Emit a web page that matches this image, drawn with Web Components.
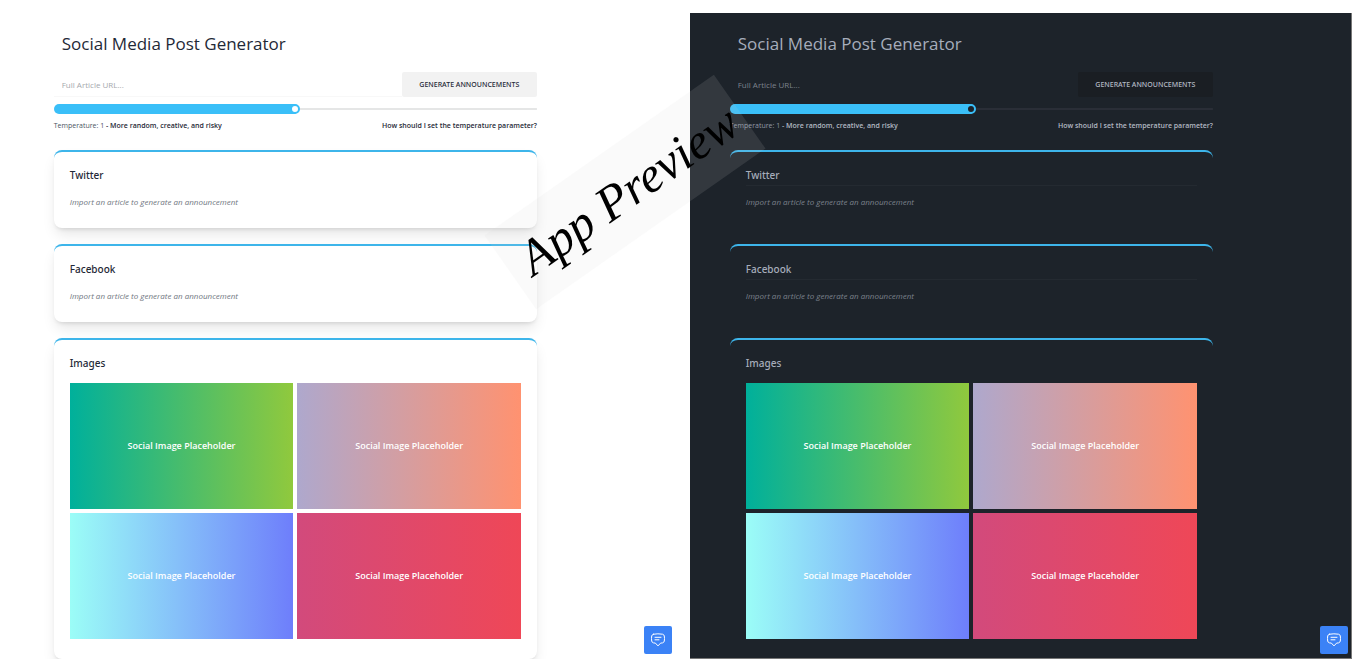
<!DOCTYPE html>
<html lang="en">
<head>
<meta charset="utf-8">
<meta name="viewport" content="width=device-width, initial-scale=1">
<title>Social Media Post Generator</title>
<style>
  body { margin: 0; background: #fff; font-family: "Open Sans", "Noto Sans", sans-serif; }
</style>
</head>
<body>
<preview-board>
  <post-generator theme="light"></post-generator>
  <post-generator theme="dark"></post-generator>
  <preview-stamp slot="stamp">App Preview</preview-stamp>
</preview-board>
<script>
const define = (name, html) => {
  const template = document.createElement('template');
  template.innerHTML = html;
  customElements.define(name, class extends HTMLElement {
    constructor() {
      super();
      this.attachShadow({ mode: 'open' }).append(template.content.cloneNode(true));
    }
  });
};

define('preview-board', `
  <style>
    :host { display: block; position: relative; padding: 13px 14px; }
    main { display: grid; grid-template-columns: 1fr 1fr; gap: 14px; }
  </style>
  <main><slot></slot></main>
  <slot name="stamp"></slot>
`);

define('preview-stamp', `
  <style>
    :host {
      position: absolute; left: 625px; top: 192px; width: 280px; height: 90px;
      display: flex; align-items: center; justify-content: center;
      transform: translate(-50%, -50%) rotate(-35deg);
      background: rgba(210, 210, 210, .12); color: #000; pointer-events: none;
      font: italic 50px/90px "Liberation Serif", serif; white-space: nowrap;
    }
    span { padding-left: 8px; }
  </style>
  <span><slot></slot></span>
`);

define('social-card', `
  <style>
    :host { display: block; border-top: 2px solid #3db5ea; border-radius: 8px; padding: 15px 16px 20px;
      box-sizing: border-box; background: var(--card); box-shadow: var(--shadow); }
    h2 { margin: 0; font: 500 10px/16px "Noto Sans", sans-serif; color: var(--heading);
      padding-bottom: 2px; border-bottom: 1px solid var(--line); }
  </style>
  <h2><slot name="title"></slot></h2>
  <slot></slot>
`);

define('image-tile', `
  <style>
    :host { display: flex; align-items: center; justify-content: center; aspect-ratio: 16 / 9;
      color: #fff; font-size: 9px; line-height: 12px; font-weight: 600;
      background: linear-gradient(90deg, var(--from), var(--to)); }
  </style>
  <slot></slot>
`);

define('chat-button', `
  <style>
    :host { display: block; }
    button { display: flex; align-items: center; justify-content: center; width: 28px; height: 28px;
      padding: 0; border: 0; border-radius: 2px; background: #3b82f6; color: #fff; cursor: pointer; }
    svg { width: 16px; height: 16px; }
  </style>
  <button type="button" aria-label="Open chat">
    <svg viewBox="0 0 16 16" fill="none" stroke="currentColor" stroke-width="1" stroke-linecap="round" stroke-linejoin="round" aria-hidden="true">
      <path d="M3.500 2.200Q8 1.400 12.500 2.200Q14 2.500 14.300 4Q14.700 6.500 14.300 9Q14 10.600 12.500 10.900L10.600 11.100L8 13.900L5.400 11.100L3.500 10.900Q2 10.600 1.700 9Q1.300 6.500 1.700 4Q2 2.500 3.500 2.200Z"/>
      <path d="M5 5.300H11M5 7.800H9"/>
    </svg>
  </button>
`);

define('post-generator', `
  <style>
    :host { display: block; position: relative; overflow: hidden; box-sizing: border-box;
      padding: 18px 21% 0 6%; background: var(--base); color: var(--text);
      --base: #fff; --card: #fff; --text: #1f2937; --heading: #1f2937; --muted: #6f7680; --hint: #a5a8ad;
      --soft: #4b5563; --field: #f8f8f8; --btn: #f2f2f2; --track: #e5e6e6; --line: transparent;
      --shadow: 0 8px 14px -2px rgba(0,0,0,.1), 0 3px 4px -2px rgba(0,0,0,.12); --accent: #3abff8; }
    :host([theme="dark"]) { box-shadow: inset -1px -1px #777;
      --base: #1d232a; --card: transparent; --text: #b3b9c3; --heading: #a6adbb; --muted: #7c828c; --hint: #7c828c;
      --soft: #9299a5; --field: transparent; --btn: #1a1e23; --track: #2a2e37; --line: #242a31;
      --shadow: none; }
    h1 { margin: 0 8px 15px; font-size: 17px; line-height: 26px; font-weight: 400; color: var(--heading); }
    form { margin: 0; }
    .row { display: flex; height: 25px; }
    .url { flex: 1; min-width: 0; box-sizing: border-box; padding: 2px 8px 0; border: 0;
      border-bottom: 1px solid var(--field); background: none; color: var(--text); font: 8px/12px "Open Sans", sans-serif; }
    .url::placeholder { color: var(--hint); opacity: 1; }
    .go { width: 28%; padding: 0; border: 0; border-radius: 2px; background: var(--btn); color: var(--text);
      font: 500 7px/10px "Noto Sans", sans-serif; text-transform: uppercase; cursor: pointer; }
    .range { display: block; appearance: none; width: 100%; height: 10px; margin: 7px 0; border-radius: 5px;
      background: linear-gradient(var(--accent), var(--accent)) 0 0 / 50% 100% no-repeat,
                  linear-gradient(var(--track), var(--track)) 0 50% / 100% 2px no-repeat; }
    .range::-webkit-slider-thumb { appearance: none; width: 10px; height: 10px; box-sizing: border-box;
      border: 2px solid var(--accent); border-radius: 50%; background: var(--base); }
    .notes { display: flex; justify-content: space-between; font-size: 7px; line-height: 10px; margin-bottom: 19px; }
    label { color: var(--soft); }
    b, a { color: var(--text); font-weight: 600; text-decoration: none; }
    .cards { display: grid; gap: 16px; }
    p { margin: 12px 0 0; font-size: 8px; line-height: 8px; font-style: italic; color: var(--muted); }
    .text { height: 78px; }
    .images { --line: transparent; }
    .tiles { display: grid; grid-template-columns: 1fr 1fr; gap: 4px; margin-top: 9px; }
    chat-button { position: absolute; right: 4px; bottom: 5px; }
  </style>
  <h1>Social Media Post Generator</h1>
  <form>
    <div class="row">
      <input class="url" type="text" placeholder="Full Article URL..." aria-label="Full Article URL">
      <button class="go" type="button">Generate announcements</button>
    </div>
    <input class="range" id="temp" type="range" min="0" max="2" step="0.1" value="1">
    <div class="notes">
      <label for="temp">Temperature: 1 <b>- More random, creative, and risky</b></label>
      <a href="#temperature">How should I set the temperature parameter?</a>
    </div>
  </form>
  <div class="cards">
    <social-card class="text"><span slot="title">Twitter</span><p>Import an article to generate an announcement</p></social-card>
    <social-card class="text"><span slot="title">Facebook</span><p>Import an article to generate an announcement</p></social-card>
    <social-card class="images"><span slot="title">Images</span>
      <div class="tiles">
        <image-tile style="--from:#00b09b;--to:#90c93d">Social Image Placeholder</image-tile>
        <image-tile style="--from:#aea8cd;--to:#ff9270">Social Image Placeholder</image-tile>
        <image-tile style="--from:#9bfdf7;--to:#6e7efb">Social Image Placeholder</image-tile>
        <image-tile style="--from:#d24a7c;--to:#ef4757">Social Image Placeholder</image-tile>
      </div>
    </social-card>
  </div>
  <chat-button></chat-button>
`);
</script>
</body>
</html>
